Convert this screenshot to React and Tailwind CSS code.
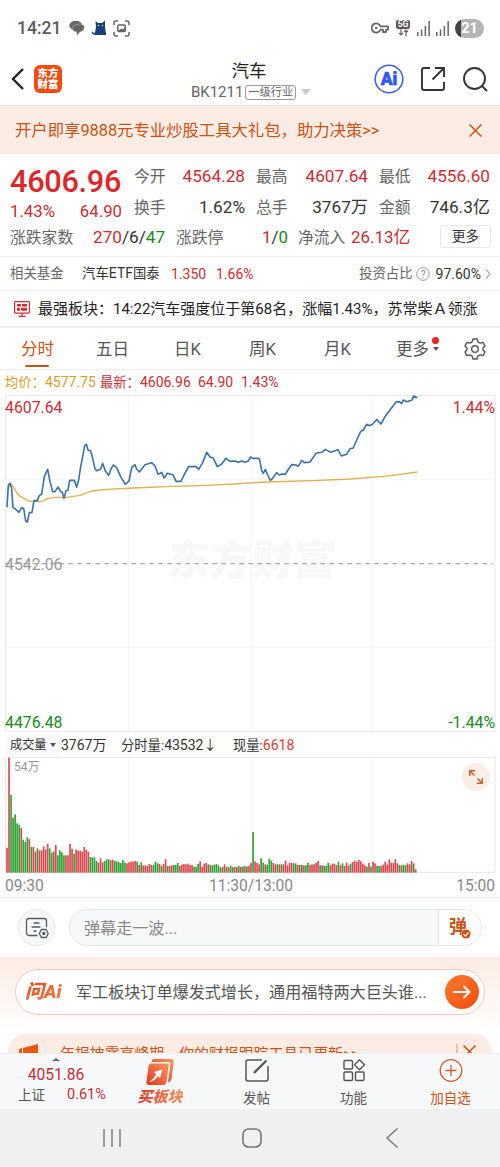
import React from 'react';

// minute prices and running average, in chart units (3 units per pixel)
const PRICE =
  '21,547 25,480 30,475 35,490 39,548 46,552 57,562 65,548 71,550 77,588 82,591 88,563 96,562 102,527 112,527 118,512 125,507 133,455 143,433 150,470 158,500 165,500 174,486 182,500 187,502 192,520 198,497 204,495 209,466 223,466 230,487 236,465 242,425 248,395 254,362 259,358 264,375 272,378 278,400 285,432 290,437 302,432 308,415 316,438 326,451 334,430 340,420 350,428 362,455 376,478 387,468 395,428 405,419 410,432 418,441 435,419 455,413 465,423 474,448 485,442 492,459 502,445 519,449 528,469 543,469 552,450 566,425 588,425 596,433 607,415 620,382 630,396 640,400 652,425 665,417 678,400 690,409 705,408 715,412 725,408 735,412 745,408 752,396 758,400 776,400 779,404 785,437 790,445 796,433 803,450 811,466 818,460 830,443 838,450 846,447 856,448 864,435 875,419 888,420 895,424 905,406 914,413 930,411 948,385 965,382 976,373 992,382 1014,374 1024,393 1040,388 1050,371 1060,369 1070,345 1082,320 1090,315 1100,298 1108,302 1118,297 1130,284 1143,297 1155,275 1172,252 1188,231 1198,230 1205,236 1210,225 1220,230 1235,226 1241,213 1252,218';

const AVERAGE =
  '24,495 30,475 40,485 50,503 62,515 72,520 88,529 125,529 145,521 165,517 200,517 240,511 275,498 320,493 400,489 500,485 620,481 700,477 800,471 940,467 1050,462 1150,454 1200,448 1252,441';

const VOLUME =
  '75r 345r 233g 164g 175g 148g 143g 134r 99g 93g 106g 100r 77g 77r 63r 73g 67r 67r 79r 70r 86r 73g 60g 64r 83r 52g 67g 61g 52g 52r 52r 86r 71r 56g 69r 66r 66r 62r 77r 69r 63r 47g 46g 46g 35g 30r 43r 31r 35g 40g 40g 37r 39r 35g 33g 31g 29g 38g 30g 28r 31r 33r 33r 35r 33g 23r 31g 22r 22r 20r 26r 23r 23g 33g 28g 26r 20g 26r 40r 20g 20r 22r 23g 23g 29g 20r 24r 26r 25r 27r 23r 23r 18g 18g 26g 34r 17r 27r 29r 25g 23r 22g 24g 26g 22g 16g 17r 25r 17g 16r 21g 17g 17r 17r 20g 17r 19g 19r 19g 20r 29r 122g 34r 29r 25r 43g 30g 25r 24g 42g 36g 29r 25r 25g 25r 25g 25r 36r 22r 30r 29r 28g 28g 23r 23r 23g 22r 22g 30g 23r 25r 25r 30r 35r 22g 22r 21g 21g 30g 22r 27r 27r 23r 33g 22r 28g 20r 30r 22r 27g 32r 36r 32r 38r 34r 27r 22r 18g 29r 18g 33r 28r 21g 20g 20r 24r 33r 24r 40r 30r 29r 40r 28r 23g 22r 24g 22g 28r 25r 35r 28g 10r'
    .split(' ')
    .map((s) => ({ h: parseInt(s, 10), up: s.endsWith('r') }));

const StatusBar = () => (
  <div className="h-14 flex items-center justify-between pl-[17px] pr-4 text-[#5c5c5c]">
    <div className="flex items-center">
      <span className="text-[17.500px] font-medium w-[52px]">14:21</span>
      <svg className="w-4 h-4 mr-1.5" viewBox="0 0 16 16" fill="#666">
        <ellipse cx="6.800" cy="5.400" rx="6.500" ry="4.600" />
        <path d="M3.500 6.500Q10 2 15 5.500Q16.500 10.500 11 12L8 15.500L7.500 12Q2 11 3.500 6.500Z" stroke="#ddd" strokeWidth=".4" />
      </svg>
      <svg className="w-4 h-4 mr-1.5" viewBox="0 0 16 16">
        <path d="M4.500 1L7 3H11L14 .5V7L15.200 15H5Q1 15 .6 12Q1 11 2 12Q3 14 4 12.500L5 7Z" fill="#173f78" />
        <circle cx="7.500" cy="5.500" r=".7" fill="#fff" />
        <circle cx="11.500" cy="5.500" r=".7" fill="#fff" />
      </svg>
      <svg className="w-[17px] h-[17px]" viewBox="0 0 17 17" fill="none" stroke="#666" strokeWidth="1.500">
        <path d="M1 5V3Q1 1 3 1H5M12 1H14Q16 1 16 3V5M16 12V14Q16 16 14 16H12M5 16H3Q1 16 1 14V12" />
        <rect x="4.800" y="5" width="7.500" height="6.500" rx="1" />
        <path d="M5 11L8 8.500L9.500 9.500L12 7.500V11Z" fill="#666" stroke="none" />
      </svg>
    </div>
    <div className="flex items-center">
      <svg className="w-[18px] h-3 mr-[7px]" viewBox="0 0 18 12" fill="none" stroke="#666" strokeWidth="1.800">
        <path d="M9.500 4.300A4.600 4.600 0 1 0 9.500 7.700H12V10H15V7.700H17V4.300Z" strokeLinejoin="round" />
        <circle cx="5.300" cy="6" r="1.300" fill="#666" stroke="none" />
      </svg>
      <div className="w-[14px] h-4 flex flex-col items-center mr-[7px]">
        <span className="w-[14px] h-[9px] rounded-[2px] bg-[#5c5c5c] text-white text-[8.500px] leading-[9px] font-bold text-center">5G</span>
        <svg className="w-[11px] h-[7px]" viewBox="0 0 11 7" fill="none" stroke="#666" strokeWidth="1.200">
          <path d="M3 0V6M1 4L3 6L5 4M8 7V1M6 3L8 1L10 3" />
        </svg>
      </div>
      {[0, 1].map((i) => (
        <svg key={i} className="w-[13px] h-[15px] mr-[6px]" viewBox="0 0 13 15" fill="#666">
          <path d="M0 11H1.500V15H0ZM3.800 8.500H5.300V15H3.800ZM7.600 5H9.100V15H7.600ZM11.400 0H12.900V15H11.400Z" />
        </svg>
      ))}
      <span className="w-[29px] h-[19px] rounded-full bg-linear-to-r from-[#444] from-20% to-[#b5b5b5] to-20% text-white text-[14.500px] leading-[19px] font-bold text-center">
        21
      </span>
    </div>
  </div>
);

const Header = () => (
  <div className="h-[50px] flex items-center px-[11px] border-b border-[#e8e3e1]">
    <svg className="w-[13px] h-[22px] mr-[10px] mt-[-3px]" viewBox="0 0 13 22" fill="none" stroke="#222" strokeWidth="2.400">
      <path d="M12 1L2 11L12 21" />
    </svg>
    <div className="w-[28px] h-[28px] mr-[124px] mt-[-3px] rounded-[6px] bg-[#f9490c] text-white text-[10.500px] leading-[11px] font-black flex flex-col items-center justify-center">
      <span>东方</span>
      <span>财富</span>
    </div>
    <div className="w-[126px] flex flex-col items-center -mt-px whitespace-nowrap">
      <span className="text-[17.500px] leading-[24px] text-[#222]">汽车</span>
      <div className="flex items-center h-[19px] pl-1">
        <span className="text-[15px] text-[#666]">BK1211</span>
        <span className="ml-[2px] h-[15px] px-[2px] rounded-[3px] border border-[#999] text-[11.200px] leading-[13px] text-[#666]">一级行业</span>
        <span className="ml-[5px] border-x-[5px] border-x-transparent border-t-[6px] border-t-[#c8c8c8]" />
      </div>
    </div>
    <svg className="w-[30px] h-[30px] ml-[62px] mt-[-3px]" viewBox="0 0 30 30">
      <circle cx="15" cy="15" r="13.800" fill="none" stroke="#3e62dd" strokeWidth="1.600" />
      <text x="15" y="20.500" textAnchor="middle" fontSize="17.500" fontWeight="900" fill="#3157ee" stroke="#3157ee" strokeWidth=".6">Ai</text>
    </svg>
    <svg className="w-[24px] h-[24px] ml-[17px] mt-[-3px]" viewBox="0 0 24 24" fill="none" stroke="#333" strokeWidth="1.900">
      <path d="M9 1H3Q1 1 1 3V21Q1 23 3 23H21Q23 23 23 21V15M11.500 12.500L22.500 1.500M14 1H23V10" />
    </svg>
    <svg className="w-[25px] h-[25px] ml-[18px] mt-[-3px] shrink-0" viewBox="0 0 25 25" fill="none" stroke="#333" strokeWidth="1.900">
      <circle cx="11.500" cy="11.500" r="10.500" />
      <path d="M19 19L24 24" />
    </svg>
  </div>
);

const Promo = () => (
  <div className="h-[48px] flex items-center justify-between pl-[15px] pr-[18px] bg-[#fcece4] text-[#cc5316]">
    <span className="pt-[3px] text-[16.350px] whitespace-nowrap">开户即享9888元专业炒股工具大礼包，助力决策&gt;&gt;</span>
    <svg className="w-[13px] h-[13px]" viewBox="0 0 13 13" stroke="#cc5316" strokeWidth="1.500">
      <path d="M.5 .5L12.500 12.500M12.500 .5L.5 12.500" />
    </svg>
  </div>
);

const Stat = ({ label, value, className, color = 'text-[#333]' }) => (
  <div className={`flex items-center justify-between ${className}`}>
    <span className="text-[15.800px] text-[#666]">{label}</span>
    <span className={`text-[17.200px] ${color}`}>{value}</span>
  </div>
);

const Quote = () => (
  <div className="h-[103px] pt-[7px] border-b border-[#f0f0f0] whitespace-nowrap">
    <div className="flex pl-[10px] pr-[10px]">
      <div className="w-[112px] mr-[12px]">
        <div className="h-[41px] leading-[42px] text-[30.700px] font-medium text-[#e0262b] tracking-[-.3px]">4606.96</div>
        <div className="h-5 flex items-center justify-between text-[16.800px] text-[#cb2c35]">
          <span>1.43%</span>
          <span>64.90</span>
        </div>
      </div>
      <div className="flex-1 pt-px">
        <div className="h-[30px] flex">
          <Stat label="今开" value="4564.28" color="text-[#cb2c35]" className="w-[111px]" />
          <Stat label="最高" value="4607.64" color="text-[#cb2c35]" className="w-[112px] ml-[11px]" />
          <Stat label="最低" value="4556.60" color="text-[#cb2c35]" className="w-[111px] ml-[11px]" />
        </div>
        <div className="h-[31px] flex">
          <Stat label="换手" value="1.62%" className="w-[111px]" />
          <Stat label="总手" value="3767万" className="w-[112px] ml-[11px]" />
          <Stat label="金额" value="746.3亿" className="w-[111px] ml-[11px]" />
        </div>
      </div>
    </div>
    <div className="h-[29px] flex items-center pl-[10px] text-[16.900px]">
      <span className="w-[83px] text-[15.800px] text-[#666]">涨跌家数</span>
      <span className="w-[83px] text-[17.200px] text-[#333]">
        <span className="text-[#cb2c35]">270</span>/6/<span className="text-[#178b1d]">47</span>
      </span>
      <span className="w-[86px] text-[15.800px] text-[#666]">涨跌停</span>
      <span className="w-[36px] text-[#333]">
        <span className="text-[#cb2c35]">1</span>/<span className="text-[#178b1d]">0</span>
      </span>
      <span className="w-[53px] text-[15.800px] text-[#666]">净流入</span>
      <span className="w-[89px] text-[#cb2c35]">26.13亿</span>
      <span className="w-[51px] h-[23px] -mt-[2px] rounded-[3px] border border-[#e8e8e8] text-[13.500px] leading-[20px] text-center text-[#333]">更多</span>
    </div>
  </div>
);

const Fund = () => (
  <div className="h-[34px] pt-px flex items-center pl-[10px] border-b border-[#f2f2f2] text-[13.400px] whitespace-nowrap">
    <span className="w-[72px] text-[#666]">相关基金</span>
    <span className="w-[89px] text-[#333]">汽车<span className="text-[14px]">ETF</span>国泰</span>
    <span className="w-[45px] text-[14px] text-[#cb2c35]">1.350</span>
    <span className="w-[143px] text-[14px] text-[#cb2c35]">1.66%</span>
    <span className="text-[#666]">投资占比</span>
    <svg className="w-[14px] h-[14px] ml-[3px] mr-[6px]" viewBox="0 0 14 14">
      <circle cx="7" cy="7" r="6.300" fill="none" stroke="#999" />
      <text x="7" y="10.600" textAnchor="middle" fontSize="10" fill="#888">?</text>
    </svg>
    <span className="text-[14px] text-[#333]">97.60%</span>
    <svg className="w-[6px] h-[10px] ml-[4px]" viewBox="0 0 6 10" fill="none" stroke="#aaa" strokeWidth="1.200">
      <path d="M1 .5L5 5L1 9.500" />
    </svg>
  </div>
);

const Ticker = () => (
  <div className="h-[37px] flex items-center pl-[14px] border-b-2 border-[#f0f0f2] whitespace-nowrap">
    <svg className="w-4 h-4 mr-2" viewBox="0 0 16 16" fill="none" stroke="#cf2e35" strokeWidth="1.200">
      <rect x=".6" y=".6" width="14.800" height="11.500" rx="1" />
      <path d="M8 12V15M4.500 15.300H11.500" />
      <path d="M3 3H7V5.500H3ZM8 3H13V5.500H8ZM3 6.700H6V9.700H3ZM7 6.700H13V9.700H7Z" fill="#cf2e35" stroke="none" />
    </svg>
    <span className="pt-px text-[15px] text-[#222]">最强板块：14:22汽车强度位于第68名，涨幅1.43%，苏常柴Ａ领涨</span>
  </div>
);

const tabs = ['五日', '日K', '周K', '月K'];

const Tabs = () => (
  <div className="h-[42px] pt-[3px] flex items-center border-b border-[#eceef0] text-[16.500px] text-[#555]">
    <div className="relative w-[75px] text-center text-[#cc5316]">
      分时
      <span className="absolute left-[25px] top-[27px] w-[24px] h-[2px] rounded-full bg-[#cc5316]" />
    </div>
    {tabs.map((t) => (
      <span key={t} className="w-[75px] text-center">{t}</span>
    ))}
    <div className="relative w-[89px] pl-[21px]">
      更多
      <span className="absolute left-[57px] -top-px w-[7px] h-[7px] rounded-full bg-[#e82424]" />
      <span className="absolute left-[57.500px] top-[9px] border-x-[3px] border-x-transparent border-t-[4px] border-t-[#555]" />
    </div>
    <svg className="w-[22px] h-[22px] -mt-[3px]" viewBox="0 0 22 22" fill="none" stroke="#555" strokeWidth="1.400" strokeLinejoin="round">
      <path d="M9 1H13L13.800 3.800L16.200 5.200L19 4.400L21 7.900L19 10V12L21 14.100L19 17.600L16.200 16.800L13.800 18.200L13 21H9L8.200 18.200L5.800 16.800L3 17.600L1 14.100L3 12V10L1 7.900L3 4.400L5.800 5.200L8.200 3.800Z" />
      <circle cx="11" cy="11" r="3.300" />
    </svg>
  </div>
);

const PriceChart = () => (
  <>
    <div className="h-[25px] flex items-center pl-[5px] text-[13.300px] whitespace-nowrap text-[#cb2c35]">
      <span className="w-[95px] text-[#d3a02b]">均价：<span className="text-[14px]">4577.75</span></span>
      <span className="w-[98px]">最新：<span className="text-[14px]">4606.96</span></span>
      <span className="w-[43px] text-[14px]">64.90</span>
      <span className="text-[14px]">1.43%</span>
    </div>
    <div className="relative h-[337px] text-[15.800px] leading-5">
      <svg className="block w-[500px] h-[337px]" viewBox="0 210 1500 1011" fill="none">
        <text x="755" y="750" textAnchor="middle" fontSize="126" fontWeight="900" fill="#f8f8f8" transform="skewX(-4) translate(50 0)">东方财富</text>
        <path d="M386 210V1218M753 210V1218M1119 210V1218M16 463H1485M16 967H1485" stroke="#f3f4f6" strokeWidth="3" />
        <path d="M16 211.500H1485V1219H16Z" stroke="#e6e9ec" strokeWidth="3" />
        <path d="M16 716H1478" stroke="#aaa" strokeWidth="4" strokeDasharray="14 13" />
        <polyline points={AVERAGE} stroke="#dfb04d" strokeWidth="4" strokeLinejoin="round" />
        <polyline points={PRICE} stroke="#3a72a8" strokeWidth="4.800" strokeLinejoin="round" />
      </svg>
      <span className="absolute left-[5px] top-[3px] text-[#cb2c35]">4607.64</span>
      <span className="absolute right-[5px] top-[3px] text-[#cb2c35]">1.44%</span>
      <span className="absolute left-[5px] top-[160px] text-[#999]">4542.06</span>
      <span className="absolute left-[5px] -bottom-px text-[#178b1d]">4476.48</span>
      <span className="absolute right-[5px] -bottom-px text-[#178b1d]">-1.44%</span>
    </div>
  </>
);

const VolumeChart = () => (
  <>
    <div className="h-[25px] pt-px flex items-center pl-[6px] text-[13.300px] whitespace-nowrap text-[#333]">
      <span className="w-[55px] h-[20px] pl-[4px] flex items-center rounded-[2px] bg-[#f8f9fb] text-[12.200px]">
        成交量
        <span className="ml-[3px] border-x-[3px] border-x-transparent border-t-[4px] border-t-[#555]" />
      </span>
      <span className="w-[60px] text-[14px]">3767万</span>
      <span className="w-[112px]">分时量:<span className="text-[14px]">43532</span>↓</span>
      <span>现量:<span className="text-[14px] text-[#dd3b3b]">6618</span></span>
    </div>
    <div className="relative h-[116px]">
      <svg className="block w-[500px] h-[116px]" viewBox="0 0 1500 348" fill="none">
        <path d="M386 2V346M753 2V346M1119 2V346" stroke="#f3f4f6" strokeWidth="3" />
        <path d="M16 2H1485V346H16Z" stroke="#e6e9ec" strokeWidth="3" />
        {VOLUME.map((v, i) => (
          <rect key={i} x={18.500 + i * 6.1} y={347 - v.h} width="5" height={v.h} fill={v.up ? '#d94a50' : '#2da334'} />
        ))}
      </svg>
      <span className="absolute left-[14px] top-[2px] text-[12px] leading-4 text-[#999]">54万</span>
      <span className="absolute left-[462px] top-[6px] w-[28px] h-[28px] rounded-full bg-[#fceee7] flex items-center justify-center">
        <svg className="w-[14px] h-[14px]" viewBox="0 0 14 14" fill="none" stroke="#cc6430" strokeWidth="1.500">
          <path d="M.8 6V.8H6M1 1L5.500 5.500M13.200 8V13.200H8M13 13L8.500 8.500" />
        </svg>
      </span>
    </div>
    <div className="h-[25px] pt-[3px] flex items-center justify-between px-[5px] border-b border-[#ededed] text-[15.600px] text-[#888]">
      <span className="w-[60px]">09:30</span>
      <span className="pl-[2px]">11:30/13:00</span>
      <span className="w-[60px] text-right">15:00</span>
    </div>
  </>
);

const CommentBar = () => (
  <div className="h-[59px] flex items-center pl-[18px]">
    <span className="w-[37px] h-[37px] rounded-full border border-[#e4e7ea] bg-[#f7f8fa] flex items-center justify-center mr-[14px]">
      <svg className="w-[24px] h-[22px]" viewBox="0 0 24 22" fill="none" stroke="#555b63" strokeWidth="1.300">
        <path d="M12.500 18.500H4Q1.500 18.500 1.500 16V4Q1.500 1.500 4 1.500H19Q21.500 1.500 21.500 4V10M8.500 6H14.500M6.500 10H15.500M8.500 14H11.500" />
        <path d="M16.500 12.500H21L23.200 16.500L21 20.500H16.500L14.300 16.500Z" />
        <circle cx="18.800" cy="16.500" r="1" fill="#555b63" />
      </svg>
    </span>
    <div className="w-[413px] h-[37px] flex rounded-full border border-[#e4e7ea] overflow-hidden bg-[#f7f8fa]">
      <span className="flex-1 pl-[14px] text-[16.100px] leading-[38px] text-[#888]">弹幕走一波...</span>
      <span className="relative w-[43px] bg-white border-l border-[#e4e7ea] pl-[10px] text-[18px] leading-[34px] font-bold text-[#cc5316]">
        弹
        <svg className="absolute left-[22px] top-[19px] w-[10px] h-[10px]" viewBox="0 0 10 10">
          <circle cx="5" cy="5" r="4.800" fill="#cc5316" stroke="#fff" strokeWidth=".5" />
          <path d="M2.500 5L4.500 7L7.500 3.500" fill="none" stroke="#fff" strokeWidth="1.200" />
        </svg>
      </span>
    </div>
  </div>
);

const AskAi = () => (
  <div className="h-[77px] pt-[12px] pl-[15px] bg-linear-to-b from-[#fcece4] to-white">
    <div className="w-[470px] h-[46px] flex items-center rounded-full border border-[#eccbbb] bg-white pl-[9px] pr-[5px] whitespace-nowrap">
      <span className="w-[51px] text-[19px] font-black italic bg-linear-to-br from-[#dd3f18] to-[#fb9652] bg-clip-text text-transparent">问Ai</span>
      <span className="flex-1 pt-[3px] text-[16.100px] text-[#555]">军工板块订单爆发式增长，通用福特两大巨头谁...</span>
      <span className="w-[34px] h-[34px] rounded-full bg-linear-to-br from-[#ff7b2e] to-[#f4490b] flex items-center justify-center">
        <svg className="w-[18px] h-[14px]" viewBox="0 0 18 14" fill="none" stroke="#fff" strokeWidth="2" strokeLinecap="round" strokeLinejoin="round">
          <path d="M1 7H16.500M11 1.500L16.500 7L11 12.500" />
        </svg>
      </span>
    </div>
  </div>
);

// only the top of the notice card shows above the bottom bar
const Notice = () => (
  <div className="h-[19px] px-2 overflow-hidden">
    <div className="h-[38px] flex items-start rounded-[18px] bg-[#fcece4] pt-[10px] pl-[11px] text-[#cc5316]">
      <svg className="w-[20px] h-[18px] mr-[21px]" viewBox="0 0 20 18" fill="#e9560d">
        <path d="M0 5L3 4V14L0 13ZM4 4L19 0V18L4 14Z" />
      </svg>
      <span className="w-[397px] text-[14.900px] leading-5 whitespace-nowrap">年报披露高峰期，你的财报跟踪工具已更新&gt;&gt;</span>
      <svg className="-ml-[1px] w-[22px] h-[14px] shrink-0" viewBox="0 0 22 14" fill="none" stroke="#cc5316" strokeWidth="1.500">
        <path d="M1 0V14" stroke="#d9b5a3" />
        <path d="M7.500 1.500L19.500 13.500M19.500 1.500L7.500 13.500" />
      </svg>
    </div>
  </div>
);

const BottomBar = () => (
  <div className="relative h-[56px] flex bg-[#f7f8fa] border-t border-[#ebedef] text-[13.500px] text-[#555] whitespace-nowrap">
    <span className="absolute left-[52px] top-[4px] border-x-[4px] border-x-transparent border-b-[3px] border-b-[#666]" />
    <div className="w-[112px] pt-[11px]">
      <div className="h-5 leading-5 text-center text-[15.600px] text-[#cb2c35]">4051.86</div>
      <div className="h-5 flex items-center pl-[18px]">
        <span className="w-[49px]">上证</span>
        <span className="text-[14.500px] text-[#cb2c35]">0.61%</span>
      </div>
    </div>
    <div className="w-[96px] flex flex-col items-center pt-[5px]">
      <svg className="w-[28px] h-[26px]" viewBox="0 0 28 26">
        <defs>
          <linearGradient id="buy" x1="0" y1="1" x2="1" y2="0">
            <stop offset="0" stopColor="#df3b22" />
            <stop offset="1" stopColor="#f9945b" />
          </linearGradient>
        </defs>
        <path d="M8 0H25Q28 0 27.700 3L25.500 20Q25 23 22 23L24.500 5Q25 3 22.500 3H5.500Q6 0 8 0Z" fill="url(#buy)" />
        <path d="M5 4.500H21Q23 4.500 22.700 6.500L20.500 23Q20 26 17 26H3Q0 26 .4 23L2.500 7Q3 4.500 5 4.500Z" fill="url(#buy)" />
        <path d="M3 23Q9 22 12 17L14 19L16.500 10.500L8 13L10 15Q9 19 3 23Z" fill="#fff" />
      </svg>
      <span className="h-[22px] leading-[24px] text-[15px] font-black italic bg-linear-to-r from-[#dc3427] to-[#f58f5b] bg-clip-text text-transparent">买板块</span>
    </div>
    <div className="w-[97px] flex flex-col items-center pt-[5px]">
      <svg className="w-[24px] h-[24px]" viewBox="0 0 24 24" fill="none" stroke="#555" strokeWidth="1.500">
        <path d="M17 1H3Q1 1 1 3V20Q1 22 3 22H21Q23 22 23 20V7" />
        <path d="M9 14L21.500 1.500" strokeWidth="2.300" />
      </svg>
      <span className="mt-[5px] h-5 leading-5">发帖</span>
    </div>
    <div className="w-[97px] flex flex-col items-center pt-[5px]">
      <svg className="w-[22px] h-[24px]" viewBox="0 0 22 24" fill="none" stroke="#555" strokeWidth="1.400">
        <rect x="1" y="1.500" width="8.500" height="8.500" rx="1" />
        <rect x="1" y="13" width="8.500" height="8.500" rx="1" />
        <rect x="12.500" y="13" width="8.500" height="8.500" rx="1" />
        <path d="M16.500 .8L21.500 5.800L16.500 10.800L11.500 5.800Z" strokeLinejoin="round" />
      </svg>
      <span className="mt-[5px] h-5 leading-5">功能</span>
    </div>
    <div className="w-[97px] flex flex-col items-center pt-[5px] text-[#cc5316]">
      <svg className="w-[24px] h-[24px]" viewBox="0 0 24 24" fill="none" stroke="#cc6030" strokeWidth="1.300">
        <circle cx="12" cy="11.500" r="10.800" />
        <path d="M12 6V17M6.500 11.500H17.500" />
      </svg>
      <span className="mt-[5px] h-5 leading-5">加自选</span>
    </div>
  </div>
);

const SystemNav = () => (
  <div className="h-[58px] flex items-center bg-[#f0f0f2]">
    <svg className="w-[18px] h-[18px] ml-[103px]" viewBox="0 0 18 18" stroke="#777" strokeWidth="1.400">
      <path d="M1 0V18M9 0V18M17 0V18" />
    </svg>
    <svg className="w-[20px] h-[20px] ml-[121px]" viewBox="0 0 20 20" fill="none" stroke="#777" strokeWidth="1.600">
      <rect x="1" y="1" width="18" height="18" rx="5.500" />
    </svg>
    <svg className="w-[12px] h-[20px] ml-[124px]" viewBox="0 0 12 20" fill="none" stroke="#777" strokeWidth="1.400">
      <path d="M11.500 .5L1 10L11.500 19.500" />
    </svg>
  </div>
);

const App = () => {
  return (
    <div className="w-[500px] h-[1167px] overflow-hidden bg-white font-[Roboto,'Noto_Sans_CJK_SC',sans-serif]">
      <StatusBar />
      <Header />
      <Promo />
      <Quote />
      <Fund />
      <Ticker />
      <Tabs />
      <PriceChart />
      <VolumeChart />
      <CommentBar />
      <AskAi />
      <Notice />
      <BottomBar />
      <SystemNav />
    </div>
  );
};

export default App;
